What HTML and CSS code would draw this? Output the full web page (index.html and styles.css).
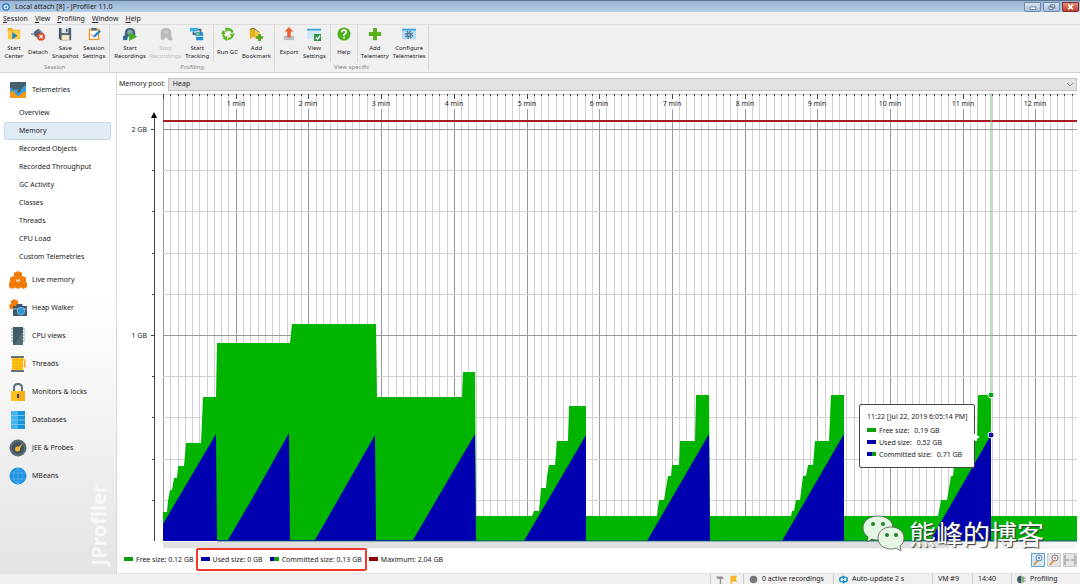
FILE: index.html
```html
<!DOCTYPE html>
<html lang="en">
<head>
    <meta charset="UTF-8">
    <meta name="viewport" content="width=device-width, initial-scale=1.0">
    <title>Local attach [8] - JProfiler 11.0</title>
    <link rel="stylesheet" href="styles.css">
</head>
<body>
    <header class="titlebar">
        <svg class="app-icon" viewBox="0 0 16 16"><circle cx="8" cy="8" r="7.500" fill="#1d72c8"/><circle cx="8" cy="8" r="5" fill="#e8f3fd"/><path d="M5 9l6-4-2 6z" fill="#1d72c8"/></svg>
        <span class="title">Local attach [8] - JProfiler 11.0</span>
        <button class="win" aria-label="Minimize"><svg viewBox="0 0 16 10"><rect x="5" y="5" width="7" height="3" fill="#fff" stroke="#56708e"/></svg></button>
        <button class="win" aria-label="Restore"><svg viewBox="0 0 16 10"><path d="M7 2h5v4H7zM5 4h5v4H5z" fill="#fff" stroke="#46607e"/></svg></button>
        <button class="win close" aria-label="Close"><svg viewBox="0 0 16 10"><path d="M5 2l6 6M11 2L5 8" stroke="#fff" stroke-width="2"/></svg></button>
    </header>

    <nav class="menubar">
        <button><u>S</u>ession</button>
        <button><u>V</u>iew</button>
        <button><u>P</u>rofiling</button>
        <button><u>W</u>indow</button>
        <button><u>H</u>elp</button>
    </nav>

    <div class="toolbar">
        <div class="group">
            <div class="tools">
                <button class="tool">
                    <svg viewBox="0 0 16 16"><path d="M1 1h5l1 2h8v4H1z" fill="#f0a81c"/><path d="M1 4h14v10H1z" fill="#fcc844"/><path d="M6 6l6 4-6 4z" fill="#1786c8"/></svg>
                    <span>Start<br>Center</span>
                </button>
                <button class="tool">
                    <svg viewBox="0 0 16 16"><path d="M3 8q0-4 6-6l4 4-2 6q-6 1-8-4z" fill="#4c6578"/><path d="M0 8h4M9 3l4 4" stroke="#8a9aa6" stroke-width="2"/><circle cx="11.500" cy="11" r="4.500" fill="#dc4a2c"/><path d="M9.500 9l4 4M13.500 9l-4 4" stroke="#fff" stroke-width="1.500"/></svg>
                    <span>Detach</span>
                </button>
                <button class="tool">
                    <svg viewBox="0 0 16 16"><path d="M1 1h14v14H3l-2-2z" fill="#465c6e"/><path d="M4 1h8v6H4z" fill="#dfe8ee"/><path d="M9 2h2v4H9z" fill="#465c6e"/><path d="M4 9h9v6H4z" fill="#e9d8a8"/><path d="M5 11h7M5 13h7" stroke="#fff"/></svg>
                    <span>Save<br>Snapshot</span>
                </button>
                <button class="tool">
                    <svg viewBox="0 0 16 16"><path d="M2 2h12v13H2z" fill="#ee9a26"/><path d="M3.500 4h9v9.500h-9z" fill="#fff"/><path d="M5 1h6v3H5z" fill="#566b7b"/><path d="M4 8l3 3 2-2" fill="none" stroke="#d44" stroke-width="1"/><path d="M7 12l1-3 6-6 2 2-6 6z" fill="#268cc8"/></svg>
                    <span>Session<br>Settings</span>
                </button>
            </div>
            <div class="caption">Session</div>
        </div>
        <div class="group">
            <div class="tools">
                <button class="tool">
                    <svg viewBox="0 0 16 16"><path d="M2 13V7q0-6 6-6t6 6v5l-4 2-3-4-3 4z" fill="#486577"/><circle cx="8" cy="6" r="3" fill="#88abc0"/><path d="M7 6l9 5-9 5z" fill="#43ae20"/><path d="M0 10h5v5H0z" fill="#2b6e9c"/></svg>
                    <span>Start<br>Recordings</span>
                </button>
                <button class="tool" disabled>
                    <svg viewBox="0 0 16 16"><path d="M2 14V7q0-6 6-6t6 6v3l2 5h-5l-3-4-3 4z" fill="#b9b9b9"/><circle cx="8" cy="6" r="2" fill="#ccc"/></svg>
                    <span>Stop<br>Recordings</span>
                </button>
                <button class="tool">
                    <svg viewBox="0 0 16 16"><path d="M0 1h9v4H0z" fill="#34aee4"/><path d="M4 5v3h5M9 3h3v4" fill="none" stroke="#4c6578" stroke-width="2"/><path d="M6 6h9v4H6zM7 11h8v4H7z" fill="#1d91c9"/><path d="M7 7h4v2H7z" fill="#8fcf5d"/></svg>
                    <span>Start<br>Tracking</span>
                </button>
            </div>
            <div class="caption">Profiling</div>
            <div class="tools divided">
                <button class="tool">
                    <svg viewBox="0 0 16 16"><circle cx="8" cy="8" r="5.500" fill="none" stroke="#5eb923" stroke-width="2.500" stroke-dasharray="9 2.500"/><path d="M5 0l5 3-5 3zM16 7l-3 5-3-4zM7 10v6l-5-3zM0 8l2-4 3 4z" fill="#5eb923"/></svg>
                    <span>Run GC</span>
                </button>
                <button class="tool">
                    <svg viewBox="0 0 16 16"><path d="M1 3q0-2 2-2h3q2 0 2 2v10l-3-2-4 3z" fill="#e9b01e"/><path d="M7 3l5 2 2 9H7z" fill="#f5ca48"/><path d="M1 3q3-3 7 0l3 3" fill="none" stroke="#5c6b70"/><path d="M12 8v8M8 12h8" stroke="#51a51c" stroke-width="3"/></svg>
                    <span>Add<br>Bookmark</span>
                </button>
            </div>
        </div>
        <div class="group">
            <div class="tools">
                <button class="tool">
                    <svg viewBox="0 0 16 16"><path d="M2 10h12v5H2z" fill="#b9c0c5"/><path d="M8 0l5 5H10v7H6V5H3z" fill="#e9622d"/></svg>
                    <span>Export</span>
                </button>
                <button class="tool">
                    <svg viewBox="0 0 16 16"><path d="M0 2h16v12H0z" fill="#d2e8f3"/><path d="M0 2h16v2H0z" fill="#3aa5da"/><path d="M8 8h8v8H8z" fill="#329548"/><path d="M10 12l2 2 3-4" stroke="#fff" stroke-width="1.500" fill="none"/></svg>
                    <span>View<br>Settings</span>
                </button>
            </div>
            <div class="tools divided">
                <button class="tool">
                    <svg viewBox="0 0 16 16"><circle cx="8" cy="8" r="7.500" fill="#4eb01f"/><path d="M5.500 6q0-2.500 2.500-2.500T10.500 6q0 1-1.500 2T8 10M8 11v2" fill="none" stroke="#fff" stroke-width="1.800"/></svg>
                    <span>Help</span>
                </button>
            </div>
            <div class="caption">View specific</div>
            <div class="tools divided">
                <button class="tool">
                    <svg viewBox="0 0 16 16"><path d="M8 1v14M1 8h14" stroke="#55b01c" stroke-width="4.500"/></svg>
                    <span>Add<br>Telemetry</span>
                </button>
                <button class="tool">
                    <svg viewBox="0 0 16 16"><path d="M0 2h16v12H0z" fill="#b5ddf1"/><path d="M0 2h16v2H0z" fill="#3aa5da"/><circle cx="8" cy="9" r="3" fill="#4d7894"/><circle cx="8" cy="9" r="4" fill="none" stroke="#4d7894" stroke-width="1.500" stroke-dasharray="1.800 1.300"/><circle cx="8" cy="9" r="1" fill="#b5ddf1"/></svg>
                    <span>Configure<br>Telemetries</span>
                </button>
            </div>
        </div>
    </div>

    <div class="workspace">
        <aside class="sidebar">
            <a class="section" href="#">
                <svg viewBox="0 0 18 18"><path d="M1 1h16v16H1z" fill="#f69a1c"/><path d="M1 1h16v9l-4 2-3 3-3-1-2-4-4 1z" fill="#3b9bd4"/><path d="M1 1h16v3l-4 3-2 4-3 1 1-4-4 1-4-3z" fill="#485f70"/></svg>
                Telemetries
            </a>
            <nav class="views">
                <a href="#">Overview</a>
                <a href="#" class="active">Memory</a>
                <a href="#">Recorded Objects</a>
                <a href="#">Recorded Throughput</a>
                <a href="#">GC Activity</a>
                <a href="#">Classes</a>
                <a href="#">Threads</a>
                <a href="#">CPU Load</a>
                <a href="#">Custom Telemetries</a>
            </nav>
            <a class="section" href="#">
                <svg viewBox="0 0 18 18"><g fill="#f57c0a"><path d="M9 0l4 2v5L9 9 5 7V2z"/><path d="M4.500 5l3 1.500v5l-3 1.500L1 11.500v-5zM13.500 5L17 6.500v5L13.500 13l-3-1.500v-5z"/><path d="M3.500 10L7 12v4l-3.500 2L0 16v-4zM9 10l3.500 2v4L9 18l-3.500-2v-4zM14.500 10L18 12v4l-3.500 2-3.500-2v-4z"/></g><path d="M5 2l4 2 4-2M0 12l3.500 2L7 12M6 12l3 2 3-2M11 12l3.500 2 3.500-2" fill="none" stroke="#e06a05" stroke-width=".7"/></svg>
                Live memory
            </a>
            <a class="section" href="#">
                <svg viewBox="0 0 18 18"><path d="M5 0l4 2v3l2 1v4H1L0 6l2-1V2z" fill="#f57c0a"/><path d="M4 7h3l1-2h5l1 2h4v10H4z" fill="#3d5a70"/><path d="M4 9h14v2H4z" fill="#6e8796"/><circle cx="12" cy="12" r="4" fill="#7fb5dc"/><circle cx="12" cy="12" r="3" fill="#2d90d2"/></svg>
                Heap Walker
            </a>
            <a class="section" href="#">
                <svg viewBox="0 0 18 18"><path d="M2 2h14M2 5h14M2 8h14M2 11h14M2 14h14" stroke="#8197a5"/><path d="M4 0h10v18H4z" fill="#425b69"/><path d="M14 4v14H5z" fill="#546e7a"/></svg>
                CPU views
            </a>
            <a class="section" href="#">
                <svg viewBox="0 0 18 18"><path d="M2 1h13v2H2zM2 15h13v2H2z" fill="#65717a"/><path d="M3 3h11v12H3z" fill="#fcc113"/><path d="M3 5h11M3 8h11M3 11h11M3 13h11" stroke="#f3b20a"/><path d="M13 5q4-1 3 3-2 3 1 4" fill="none" stroke="#f6a717" stroke-width="1.500"/></svg>
                Threads
            </a>
            <a class="section" href="#">
                <svg viewBox="0 0 18 18"><path d="M5 9V5q0-4 4-4t4 4v4" fill="none" stroke="#5d6f7a" stroke-width="2"/><path d="M2 8h14v10H2z" fill="#fcc022"/><path d="M9 8h7v10H9z" fill="#f6ae16"/><path d="M8 11h2v4H8z" fill="#37474f"/></svg>
                Monitors &amp; locks
            </a>
            <a class="section" href="#">
                <svg viewBox="0 0 18 18"><path d="M2 0h14v18H2z" fill="#42b4ef"/><path d="M9 0h7v18H9z" fill="#1695db"/><path d="M2 4.500h14M2 9h14M2 13.500h14" stroke="#8fd0f5" stroke-width=".7"/></svg>
                Databases
            </a>
            <a class="section" href="#">
                <svg viewBox="0 0 18 18"><circle cx="9" cy="9" r="8.500" fill="#596a75"/><circle cx="9" cy="9" r="6" fill="#42525d"/><circle cx="8.500" cy="10" r="2.500" fill="#f7b729"/><path d="M7 10l7-6-4 7z" fill="#f7b729"/></svg>
                JEE &amp; Probes
            </a>
            <a class="section" href="#">
                <svg viewBox="0 0 18 18"><circle cx="9" cy="9" r="8.500" fill="#1b91e2"/><path d="M1 6h16M1 12h16M9 0v18M9 1Q0 9 9 17M9 1q9 8 0 16" fill="none" stroke="#5cb5f0" stroke-width=".8"/></svg>
                MBeans
            </a>
            <div class="brand">JProfiler</div>
        </aside>

        <main class="content">
            <div class="pool">
                <label for="pool">Memory pool:</label>
                <select id="pool"><option>Heap</option></select>
            </div>
            <div class="chart">
                <svg class="plot" viewBox="-46 0 963 449">
                    <g id="grid"></g>
                    <g id="labels"></g>
                    <path class="axis" d="M-9 24V448"/>
                    <path d="M-9 19l-3 6h6z"/>
                    <path class="committed" d="M0 448V419H4L5 408 7 397H9L11 385H14L15 373H21L23 350H38L40 304H53L54 250H127L129 231H213L214 304H299L300 279H312L313 423H369L371 418H376L378 395H383L384 383 386 372H392L394 348H405L406 313H423V423H494L496 407H501L503 395 505 383H508L509 372H516L517 348H532L533 302H546L547 423H628L629 418H631L633 407H637L640 383H643L645 372H650L652 348H666L668 302H681V423H775L778 407H784L788 383H790L791 372H799L800 348H814L815 302H828V423H914V448z"/>
                    <path class="used" d="M0 448V431L53 341 54 447H65L93 399 126 340 127 447H152L212 342 213 447H250L312 341 313 448H361L423 342V448H484L546 341 547 448H619L681 341V448H767L828 342V448z"/>
                    <path class="zero" d="M54 448H914"/>
                    <path class="maximum" d="M0 28H914"/>
                    <path class="cursor" d="M828 0V302"/>
                    <circle class="dot free" cx="828" cy="302" r="3"/>
                    <circle class="dot used" cx="828" cy="342" r="3"/>
                </svg>
                <div class="tooltip">
                    <div class="when">11:22 [Jul 22, 2019 6:05:14 PM]</div>
                    <div><i class="swatch free"></i>Free size: <span>0.19 GB</span></div>
                    <div><i class="swatch used"></i>Used size: <span>0.52 GB</span></div>
                    <div><i class="swatch both"></i>Committed size: <span>0.71 GB</span></div>
                </div>
                <div class="scroll"><div class="thumb"></div></div>
            </div>
            <div class="legend">
                <span class="key"><i class="swatch free"></i>Free size: 0.12 GB</span>
                <div class="highlight">
                    <span class="key"><i class="swatch used"></i>Used size: 0 GB</span>
                    <span class="key"><i class="swatch both"></i>Committed size: 0.13 GB</span>
                </div>
                <span class="key"><i class="swatch max"></i>Maximum: 2.04 GB</span>
                <div class="zoom">
                    <button class="on" aria-label="Zoom in"><svg viewBox="0 0 12 12"><path d="M2 11l4-5" stroke="#d9963c" stroke-width="2"/><circle cx="7" cy="4" r="3" fill="#dff0fa" stroke="#62889f"/><path d="M6 4h2M7 3v2" stroke="#1976b8"/></svg></button>
                    <button aria-label="Zoom out"><svg viewBox="0 0 12 12"><path d="M2 11l4-5" stroke="#d9963c" stroke-width="2"/><circle cx="7" cy="4" r="3" fill="#eee" stroke="#907a7a"/><path d="M6 4h2" stroke="#b33"/></svg></button>
                    <button aria-label="Fit width"><svg viewBox="0 0 12 12"><path d="M1 1v10M11 1v10M2 6h3M10 6H7" stroke="#888"/></svg></button>
                </div>
            </div>
            <div class="watermark">
                <svg viewBox="0 0 42 38"><g stroke="#555" stroke-width=".8"><path d="M16 1C7 1 1 6 1 13c0 4 2 7 5 9l-1 5 5-3c2 1 4 1 6 1 9 0 15-5 15-12S25 1 16 1z" fill="#e4f6e4"/><path d="M29 12c-8 0-13 5-13 11s5 11 13 11c2 0 3 0 5-1l5 3-1-5c3-2 4-5 4-8 0-6-5-11-13-11z" fill="#e4f6e4"/></g><g fill="#2a7d2a"><circle cx="11" cy="9" r="2"/><circle cx="21" cy="9" r="2"/><circle cx="25" cy="20" r="2"/><circle cx="34" cy="20" r="2"/></g></svg>
                <span>熊峰的博客</span>
            </div>
        </main>
    </div>

    <footer class="statusbar">
        <div class="cell icons">
            <svg viewBox="0 0 12 12"><path d="M1 2h7l3 3H7v7H5V5H1z" fill="#8b8f91"/></svg>
            <svg viewBox="0 0 12 12"><path d="M2 1h9L9 5l2 4H4v3H2z" fill="#f7b52a"/></svg>
        </div>
        <div class="cell recordings"><svg viewBox="0 0 12 12"><circle cx="6" cy="6" r="5" fill="#777"/></svg>0 active recordings</div>
        <div class="cell update"><svg viewBox="0 0 12 12"><path d="M3 9q-2 0-2-3t3-3h2M9 3q2 0 2 3t-3 3H6" fill="none" stroke="#178bcb" stroke-width="2"/><path d="M5 0l4 3-4 3zM7 6v6L3 9z" fill="#178bcb"/></svg>Auto-update 2 s</div>
        <div class="cell vm">VM #9</div>
        <div class="cell time">14:40</div>
        <div class="cell state"><svg viewBox="0 0 12 12"><path d="M6 1v10H4Q0 10 0 6t4-5z" fill="#3e5968"/><path d="M7 2h2v8H7z" fill="#55a84a"/><path d="M9 4h3M9 8h3" stroke="#777"/></svg>Profiling</div>
    </footer>

    <script>
        const grid = document.getElementById('grid');
        const labels = document.getElementById('labels');
        const minute = 72.7;
        const gigabyte = 206;
        const bottom = 448;

        function line(className, x1, y1, x2, y2) {
            grid.innerHTML += `<path class="${className}" d="M${x1} ${y1}L${x2} ${y2}"/>`;
        }

        function label(text, x, y, anchor) {
            labels.innerHTML += `<text x="${x}" y="${y}" text-anchor="${anchor}">${text}</text>`;
        }

        line('minor', -46, 1, 914, 1);

        // one line every six seconds, a labelled one every minute
        for (let i = 0; i <= 125; i++) {
            const x = Math.round(i * minute / 10);
            const major = i % 10 === 0;
            line(major ? 'major' : 'minor', x, major && i ? 16 : 1, x, bottom);
            line('tick', x, 1, x, major ? 6 : 3);
            if (major && i) label(`${i / 10} min`, x, 13, 'middle');
        }

        for (let i = 1; i <= 10; i++) {
            const y = Math.round(bottom - i * gigabyte / 5);
            const major = i % 5 === 0;
            line(major ? 'major' : 'minor', 0, y, 914, y);
            line('tick', major ? -12 : -11, y, -8, y);
            if (major) label(`${i / 5} GB`, -16, y + 3, 'end');
        }
    </script>
</body>
</html>
```

FILE: styles.css
```css
* {
    box-sizing: border-box;
}

body {
    display: flex;
    flex-direction: column;
    min-height: 100vh;
    margin: 0;
    font-family: "Noto Sans", "Noto Sans CJK SC", sans-serif;
    font-size: 7px;
    line-height: 10px;
    color: #222;
    background-color: #f0f0f0;
}

button {
    padding: 0;
    border: 0;
    font: inherit;
    color: inherit;
    background: none;
}

a {
    color: inherit;
    text-decoration: none;
}

svg {
    display: block;
}

.titlebar {
    display: flex;
    align-items: center;
    gap: 2px;
    height: 12px;
    padding: 0 1px 0 2px;
    border-top: 1px solid #5f7690;
    background: linear-gradient(#98b4d4, #b5cde7);
}

.app-icon {
    width: 8px;
    height: 8px;
}

.title {
    flex: 1;
    padding-left: 3px;
}

.win {
    width: 17px;
    height: 10px;
    border: 1px solid #6d88a8;
    border-radius: 0 0 2px 2px;
    background: linear-gradient(#d5e2f0, #a6bfda);
}

.win svg {
    width: 100%;
    height: 8px;
}

.win.close {
    border-color: #7b3030;
    background: linear-gradient(#df9181, #c23a25);
}

.menubar {
    display: flex;
    gap: 7px;
    height: 13px;
    padding: 1px 3px 0;
    border-bottom: 1px solid #dcdcdc;
}

.toolbar {
    display: flex;
    height: 48px;
    border-bottom: 1px solid #d4d4d4;
    font-size: 6px;
    line-height: 8px;
}

.group {
    position: relative;
    display: flex;
    height: 46px;
    border-right: 1px solid #d8d8d8;
}

.tools {
    display: flex;
    height: 37px;
    padding: 0 2px;
}

.tools.divided {
    padding: 0 1px;
    border-left: 1px solid #d8d8d8;
}

.tool {
    display: flex;
    flex-direction: column;
    align-items: center;
    min-width: 24px;
    padding: 2px 2px 0;
}

.tool svg {
    width: 14px;
    height: 14px;
}

.tool span {
    display: flex;
    flex: 1;
    align-items: center;
}

.tool:disabled {
    color: #bbb;
}

.caption {
    position: absolute;
    bottom: 0;
    width: 100%;
    text-align: center;
    color: #888;
}

.workspace {
    display: flex;
    flex: 1;
}

.sidebar {
    position: relative;
    width: 117px;
    padding: 3px 5px 0 4px;
    border-right: 1px solid #d8d8d8;
    background: linear-gradient(#fff 45%, #e4e4e4);
}

.section {
    display: flex;
    align-items: center;
    gap: 5px;
    height: 28px;
    padding-left: 5px;
}

.section svg {
    width: 18px;
    height: 18px;
}

.views a {
    display: block;
    height: 18px;
    padding: 3px 14px;
    border: 1px solid transparent;
    border-radius: 2px;
}

.views .active {
    border-color: #c9dcee;
    background-color: #e1ecf7;
}

.brand {
    position: absolute;
    right: 6px;
    bottom: 8px;
    font-family: "Open Sans", sans-serif;
    font-size: 20px;
    font-weight: bold;
    line-height: 22px;
    color: #f8f8f8;
    writing-mode: vertical-rl;
    transform: rotate(180deg);
}

.content {
    position: relative;
    flex: 1;
    min-width: 0;
    background-color: #fff;
}

.pool {
    display: flex;
    align-items: center;
    gap: 3px;
    height: 20px;
    padding: 4px 3px 2px 2px;
}

.pool select {
    flex: 1;
    height: 13px;
    padding: 0 4px;
    border: 1px solid #c4c4c4;
    font: inherit;
    color: inherit;
    appearance: none;
    background: linear-gradient(45deg, transparent 45%, #888 45%, #888 55%, transparent 55%) right 6px center / 3px 3px no-repeat, linear-gradient(-45deg, transparent 45%, #888 45%, #888 55%, transparent 55%) right 3px center / 3px 3px no-repeat, #e2e2e2;
}

.chart {
    position: relative;
}

.plot {
    width: 100%;
}

.plot text {
    fill: #222;
}

.minor,
.major,
.tick,
.axis {
    fill: none;
    stroke: #d2d0d2;
    shape-rendering: crispEdges;
}

.major {
    stroke: #999;
}

.tick,
.axis {
    stroke: #444;
}

.committed {
    fill: #00b400;
}

.plot .used {
    fill: #0000b0;
}

.zero {
    stroke: #145a78;
}

.maximum {
    stroke: #a81c24;
    stroke-width: 2;
}

.cursor {
    stroke: #7fbd85;
}

.dot {
    stroke: #fff;
}

.dot.free {
    fill: #00a81c;
}

.tooltip {
    position: absolute;
    top: 311px;
    right: 105px;
    width: 116px;
    padding: 6px 7px;
    border: 1px solid #444;
    border-radius: 2px;
    line-height: 12px;
    white-space: nowrap;
    background-color: #fff;
}

.tooltip::after {
    content: "";
    position: absolute;
    top: 28px;
    right: -6px;
    width: 7px;
    height: 8px;
    background-color: #fff;
    clip-path: polygon(0 0, 100% 50%, 0 100%);
}

.tooltip span {
    margin-left: 3px;
}

.when {
    margin-bottom: 2px;
}

.swatch {
    display: inline-block;
    width: 9px;
    height: 4px;
    margin-right: 3px;
    vertical-align: 1px;
}

.swatch.free {
    background-color: #0a9c0a;
}

.swatch.used {
    background-color: #0000a8;
}

.swatch.both {
    background: linear-gradient(90deg, #0000a8 50%, #0a9c0a 50%);
}

.swatch.max {
    background-color: #8c0000;
}

.scroll {
    height: 7px;
    margin: 0 3px 0 46px;
    background-color: #f5f5f5;
}

.thumb {
    width: 86%;
    height: 6px;
    background-color: #e0e0e0;
}

.legend {
    position: relative;
    display: flex;
    align-items: center;
    height: 22px;
    padding: 0 3px 0 7px;
    white-space: nowrap;
}

.highlight {
    display: flex;
    align-items: center;
    gap: 7px;
    height: 23px;
    margin: -2px 2px 0;
    padding: 2px 3px 0;
    border: 2px solid #f03a30;
    border-radius: 2px;
}

.zoom {
    display: flex;
    gap: 2px;
    margin-left: auto;
}

.zoom button {
    width: 14px;
    height: 14px;
    border: 1px solid #ccc;
    background-color: #e4e4e4;
}

.zoom .on {
    border-color: #5aa5dc;
    background-color: #d8eafa;
}

.watermark {
    position: absolute;
    right: 36px;
    bottom: 19px;
    display: flex;
    align-items: center;
    gap: 5px;
    font-family: "Noto Sans CJK SC", sans-serif;
    font-size: 27px;
    line-height: 40px;
    color: #fff;
    text-shadow: 1px 1px 1px #333;
}

.watermark svg {
    width: 42px;
    height: 38px;
}

.statusbar {
    display: flex;
    justify-content: flex-end;
    height: 11px;
    border-top: 1px solid #e4e4e4;
}

.cell {
    display: flex;
    align-items: center;
    gap: 4px;
    padding-left: 5px;
    border-left: 1px solid #ccc;
}

.cell svg {
    width: 9px;
    height: 9px;
}

.icons {
    width: 33px;
}

.recordings {
    width: 90px;
}

.update {
    width: 99px;
}

.vm {
    width: 40px;
}

.time {
    width: 39px;
}

.state {
    width: 69px;
}
```
